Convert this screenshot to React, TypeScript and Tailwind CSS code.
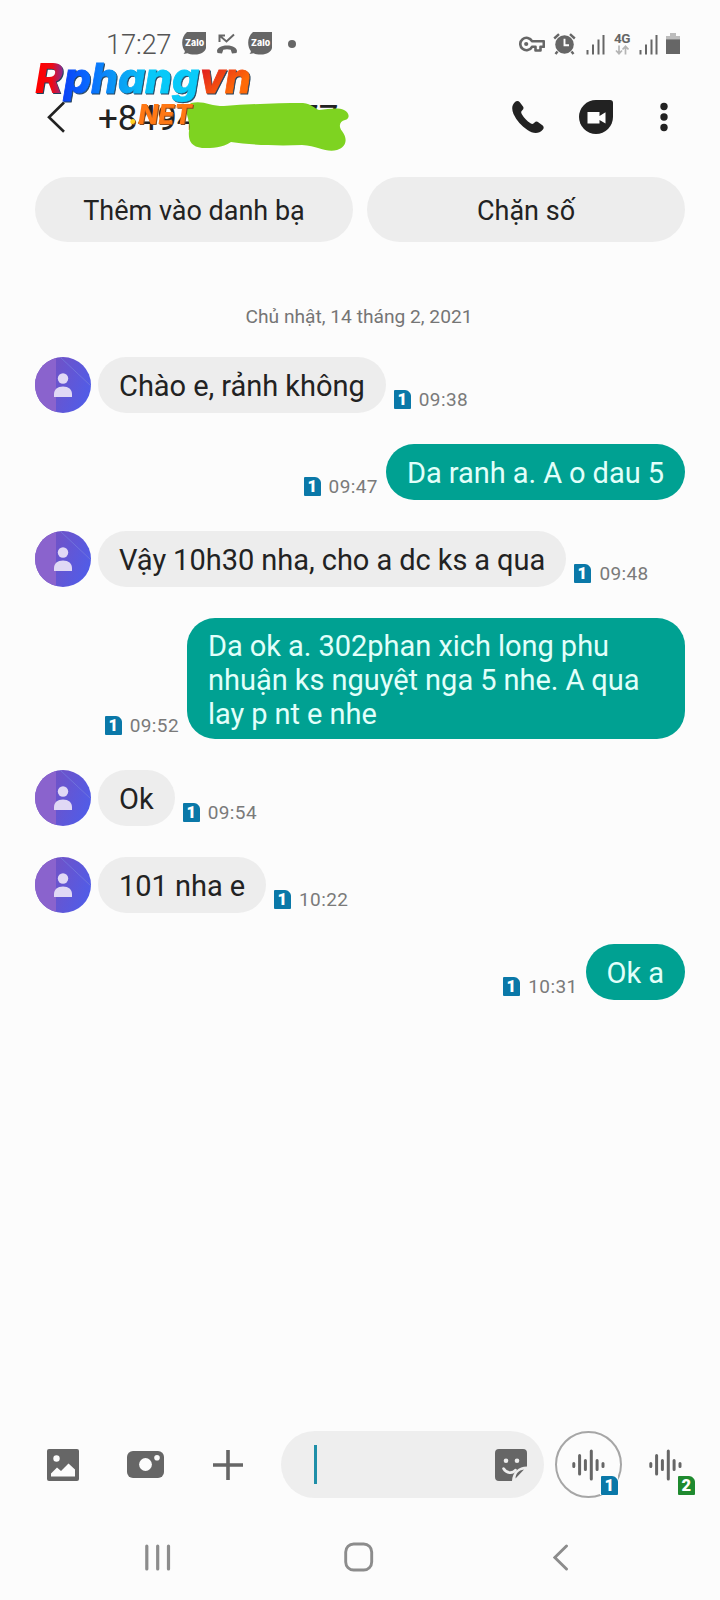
import { clsx } from 'clsx';

type Message = {
  id: number;
  text: string;
  lines?: string[];
  time: string;
  mine?: boolean;
};

const messages: Message[] = [
  { id: 1, text: 'Chào e, rảnh không', time: '09:38' },
  { id: 2, text: 'Da ranh a. A o dau 5', time: '09:47', mine: true },
  { id: 3, text: 'Vậy 10h30 nha, cho a dc ks a qua', time: '09:48' },
  {
    id: 4,
    text: '',
    lines: ['Da ok a. 302phan xich long phu', 'nhuận ks nguyệt nga 5 nhe. A qua', 'lay p nt e nhe'],
    time: '09:52',
    mine: true,
  },
  { id: 5, text: 'Ok', time: '09:54' },
  { id: 6, text: '101 nha e', time: '10:22' },
  { id: 7, text: 'Ok a', time: '10:31', mine: true },
];

function ZaloIcon() {
  return (
    <svg width="24" height="24" viewBox="0 0 24 24">
      <path d="M5 0H24V16C23 20 19 22.500 13 22.500C9 22.500 7 22 5.500 21.200L1.500 22C2.500 21 3 20 2.800 19C-1 14-1 5 5 0Z" fill="#666" />
      <text x="12.600" y="14.300" textAnchor="middle" fontSize="9.500" fontWeight="800" fill="#fff" fontFamily="Inter, sans-serif" textLength="19" lengthAdjust="spacingAndGlyphs">
        Zalo
      </text>
    </svg>
  );
}

function MissedCallIcon() {
  return (
    <svg width="22" height="22" viewBox="0 0 22 22" fill="none">
      <path d="M3.500 9V2.500H9M3.800 2.800L10.500 8.500L18 1.500" stroke="#666" strokeWidth="2" />
      <path d="M1 18C1 15 5 12.500 11 12.500S21 15 21 18L20.500 20L16 20.500L14.700 16.700C12.500 16 9.500 16 7.300 16.700L6 20.500L1.500 20Z" fill="#666" />
    </svg>
  );
}

function SignalIcon() {
  return (
    <svg width="19" height="21" viewBox="0 0 19 21" stroke="#666" strokeWidth="2">
      <path d="M1.500 16V20.500M7 10.500V20.500M12.500 5.500V20.500M17.500 1V20.500" />
    </svg>
  );
}

function StatusBar() {
  return (
    <div className="flex h-[62px] shrink-0 items-center pt-[26px] pl-[106px] pr-10">
      <span className="w-[76px] pt-0.5 text-[27.500px] leading-none font-light tracking-[-0.3px] text-[#555]">17:27</span>
      <ZaloIcon />
      <span className="ml-2.5">
        <MissedCallIcon />
      </span>
      <span className="ml-2.5">
        <ZaloIcon />
      </span>
      <span className="ml-4 h-2 w-2 rounded-full bg-[#666]" />
      <div className="ml-auto flex items-center">
        <svg width="26" height="16" viewBox="0 0 26 16" fill="none" stroke="#666" strokeWidth="2.600">
          <path d="M13 5.200A6.200 6.200 0 1 0 13 10.800H16.500V14.500H21.500V10.800H24.800V5.200Z" strokeLinejoin="round" />
          <circle cx="7.200" cy="8" r="2.100" fill="#666" stroke="none" />
        </svg>
        <svg className="ml-2" width="23" height="22" viewBox="0 0 23 22" fill="none">
          <circle cx="11.500" cy="11.500" r="9.300" fill="#666" />
          <path d="M1.200 5.500L6 1.200M17 1.200L21.800 5.500M4.500 18.500L2.500 21M18.500 18.500L20.500 21" stroke="#666" strokeWidth="2.400" />
          <path d="M11.500 5.800V12.200H16" stroke="#fff" strokeWidth="1.900" />
        </svg>
        <span className="ml-2.5">
          <SignalIcon />
        </span>
        <div className="ml-[9px] flex w-4 flex-col items-center">
          <span className="text-[13.500px] leading-[11px] font-bold tracking-[-0.5px] text-[#666]">4G</span>
          <svg className="mt-px" width="14" height="10" viewBox="0 0 14 10" fill="none" stroke="#b5b5b5" strokeWidth="1.700">
            <path d="M4 0.500V8.500M1 5.500L4 8.700L7 5.500M10.500 9.500V1.500M7.500 4.500L10.500 1.300L13.500 4.500" />
          </svg>
        </div>
        <span className="ml-[9px]">
          <SignalIcon />
        </span>
        <svg className="ml-2" width="14" height="22" viewBox="0 0 14 22">
          <path d="M4 0H10V3H14V6.500H0V3H4Z" fill="#bcbcbc" />
          <path d="M0 6.300H14V21H0Z" fill="#666" />
        </svg>
      </div>
    </div>
  );
}

function Watermark() {
  return (
    <svg className="absolute left-[20px] top-[41px]" width="250" height="110" viewBox="20 40 250 110">
      <defs>
        <linearGradient id="logoRed" gradientUnits="userSpaceOnUse" x1="38" y1="0" x2="66" y2="0">
          <stop offset="0" stopColor="#ff0000" />
          <stop offset="0.500" stopColor="#ee0a14" />
          <stop offset="1" stopColor="#6a35b5" />
        </linearGradient>
        <linearGradient id="logoBlue" gradientUnits="userSpaceOnUse" x1="62" y1="0" x2="200" y2="0">
          <stop offset="0" stopColor="#0a40f5" />
          <stop offset="0.200" stopColor="#0a6cff" />
          <stop offset="0.400" stopColor="#0a9cf5" />
          <stop offset="0.650" stopColor="#08c8f8" />
          <stop offset="1" stopColor="#08ccfa" />
        </linearGradient>
        <linearGradient id="logoOrange" gradientUnits="userSpaceOnUse" x1="205" y1="70" x2="225" y2="95">
          <stop offset="0" stopColor="#e3231c" />
          <stop offset="1" stopColor="#ff6a08" />
        </linearGradient>
      </defs>
      <g fontFamily="Inter, sans-serif" fontStyle="italic" fontWeight="800" fontSize="41" className="drop-shadow-[1px_1px_0_#24425c]">
        <text x="35" y="92" textLength="28" lengthAdjust="spacingAndGlyphs" fill="url(#logoRed)">
          R
        </text>
        <text x="64" y="92" textLength="135" lengthAdjust="spacingAndGlyphs" fill="url(#logoBlue)" stroke="url(#logoBlue)" strokeWidth="0.800">
          phang
        </text>
        <text x="200" y="92" textLength="51" lengthAdjust="spacingAndGlyphs" fill="url(#logoOrange)" stroke="url(#logoOrange)" strokeWidth="0.800">
          vn
        </text>
      </g>
      <g fontFamily="Inter, sans-serif" fontStyle="italic" fontWeight="800" fontSize="27" className="drop-shadow-[1px_1px_0_#8c4a1c]">
        <text x="129" y="122.500" textLength="63" lengthAdjust="spacingAndGlyphs" fill="#ff7814">
          <tspan fill="#ffd21e">.</tspan>NET
        </text>
      </g>
    </svg>
  );
}

function Header() {
  return (
    <header className="flex h-[115px] shrink-0 items-start pt-[38px] pl-[46px] pr-[51px]">
      <svg className="mt-px" width="20" height="32" viewBox="0 0 20 32" fill="none" stroke="#222" strokeWidth="2.600">
        <path d="M18 1.500L3 16.200L18 30.700" />
      </svg>
      <h1 className="mt-px ml-[32px] flex text-[35px] leading-[36px] text-[#222]">
        <span className="w-[201px]">+8494</span>
        <span>77</span>
      </h1>
      <div className="ml-auto flex items-start">
        <svg width="32" height="34" viewBox="0 0 32 34" fill="#222">
          <path d="M3 2C4.500 0.500 6.500 0.500 7.800 2.200L11 6.500C12 8 11.500 9.300 10.300 10.300C8.700 11.600 9 13 10 14.500C12 18 15 21 18.500 23.200C20 24.200 21.300 24.200 22.300 22.800C23.500 21.500 25 21.200 26.300 22.200L30.700 25.500C32 26.700 32 28.500 30.700 29.800C26.500 34.500 20.500 33.500 15.500 30C9.500 26 4.500 20.500 1.500 14C-0.500 9.300-0.300 5 3 2Z" />
        </svg>
        <svg className="ml-[35px]" width="34" height="34" viewBox="0 0 34 34">
          <path d="M17 0H31Q34 0 34 3V17A17 17 0 1 1 17 0Z" fill="#222" />
          <path d="M8.500 12H20.500V16L26.500 12.300V23.500L20.500 20V23.500H8.500Z" fill="#fff" />
        </svg>
        <svg className="ml-[46px]" width="10" height="34" viewBox="0 0 10 34" fill="#222">
          <circle cx="5" cy="6.500" r="3.700" />
          <circle cx="5" cy="17" r="3.700" />
          <circle cx="5" cy="27.500" r="3.700" />
        </svg>
      </div>
      <svg className="absolute left-[184px] top-[97px]" width="168" height="56" viewBox="184 96 168 56">
        <path
          d="M191 102C203 99 210 105 224 105C250 103 278 102 303 102C312 103 314 107 319 109C329 108 338 106 344 109C350 112 350 118 345 119C340 120 338 125 342 130C349 139 345 147 337 149C326 152 319 145 302 144C277 145 250 144 231 141C222 147 213 147 202 147C191 146 188 139 189 130C191 119 185 115 187 106Z"
          fill="#7ed321"
        />
      </svg>
      <Watermark />
    </header>
  );
}

function Avatar() {
  return (
    <svg className="h-14 w-14 shrink-0" viewBox="0 0 56 56">
      <defs>
        <linearGradient id="avatarFill" x1="0.200" y1="0.200" x2="1" y2="0.500">
          <stop offset="0" stopColor="#7452c4" />
          <stop offset="0.300" stopColor="#6a54cd" />
          <stop offset="1" stopColor="#525ce6" />
        </linearGradient>
        <clipPath id="avatarClip">
          <circle cx="28" cy="28" r="28" />
        </clipPath>
      </defs>
      <g clipPath="url(#avatarClip)">
        <rect width="56" height="56" fill="url(#avatarFill)" />
        <rect width="21" height="56" fill="#8a63cd" />
        <path d="M25 0L56 29" stroke="#7478dd" strokeWidth="0.800" />
      </g>
      <circle cx="28" cy="21.500" r="5.200" fill="#e0d8f5" />
      <path d="M19 40V37C19 32.500 22.500 29.500 28 29.500S37 32.500 37 37V40Z" fill="#e0d8f5" />
    </svg>
  );
}

function SimBadge({ sim = 1, className }: { sim?: 1 | 2; className?: string }) {
  return (
    <svg className={className} width="17" height="19" viewBox="0 0 17 19">
      <path d="M1 0H11C14 0 17 3 17 6V18Q17 19 16 19H1Q0 19 0 18V1Q0 0 1 0Z" fill={sim === 1 ? '#0a78a8' : '#1f8a2f'} />
      <text x="8.300" y="15.300" textAnchor="middle" fontSize="16.500" fontWeight="900" fill="#fff" fontFamily="Roboto, sans-serif">
        {sim}
      </text>
    </svg>
  );
}

function MessageRow({ message }: { message: Message }) {
  const { text, lines, time, mine } = message;

  return (
    <div className={clsx('flex items-end', mine && 'flex-row-reverse')}>
      {!mine && (
        <div className="mr-[7px]">
          <Avatar />
        </div>
      )}
      <div
        className={clsx(
          'rounded-[28px] px-[21px] text-[29px] leading-[34px] [word-spacing:-0.200px] whitespace-nowrap',
          mine ? 'bg-[#00a192] text-[#e2fffa]' : 'bg-[#ededed] text-[#222]',
          lines ? 'w-[498px] pt-[11px] pb-2' : 'pt-3 pb-2.5',
        )}
      >
        {lines ? lines.map((line) => <div key={line}>{line}</div>) : text}
      </div>
      <div className={clsx('flex items-center pb-1', mine ? 'mr-2' : 'ml-2')}>
        <SimBadge />
        <span className="ml-2 text-[19px] leading-[19px] tracking-[0.4px] text-[#7a7a7a]">{time}</span>
      </div>
    </div>
  );
}

function WaveIcon() {
  return (
    <svg width="33" height="32" viewBox="0 0 33 32" stroke="#666" strokeWidth="3" strokeLinecap="round">
      <path d="M1.800 14.500V17.500M7.600 6.500V25M13.400 11.500V20.500M19.300 2V30M25.100 11.500V20.500M31 14.500V17.500" />
    </svg>
  );
}

function Composer() {
  return (
    <div className="flex h-[67px] shrink-0 items-center pl-[47px]">
      <svg width="32" height="32" viewBox="0 0 32 32">
        <rect width="32" height="32" rx="2" fill="#666" />
        <circle cx="9.500" cy="9.500" r="3.200" fill="#fcfcfc" />
        <path d="M4 27.500V24.500L10 18.500L14 22L21.500 14.500L28 20.500V27.500Z" fill="#fcfcfc" />
      </svg>
      <svg className="ml-12" width="37" height="27" viewBox="0 0 37 27">
        <rect width="37" height="27" rx="6" fill="#666" />
        <circle cx="18.500" cy="13.500" r="6.400" fill="#fcfcfc" />
        <circle cx="30" cy="6.800" r="2.800" fill="#fcfcfc" />
      </svg>
      <svg className="ml-12" width="32" height="32" viewBox="0 0 32 32" stroke="#666" strokeWidth="3.600">
        <path d="M1 16H31M16 1V31" />
      </svg>
      <div className="ml-[37px] flex h-[67px] w-[263px] items-center justify-between rounded-full bg-[#eee] pr-[17px] pl-[33px]">
        <span className="h-[39px] w-[3px] bg-[#1f8fa8]" />
        <svg width="32" height="32" viewBox="0 0 32 32">
          <path d="M4 0H28Q32 0 32 4V17.500C23.500 17.500 17.500 23 17 32H4Q0 32 0 28V4Q0 0 4 0Z" fill="#666" />
          <path d="M8.500 19.500C11.500 24.500 17.500 25 20.500 21" stroke="#eee" strokeWidth="2.600" strokeLinecap="round" fill="none" />
          <path d="M20.500 29.500C20.500 25 23.500 21.200 29 20.500Z" fill="#666" />
          <circle cx="11" cy="11.800" r="2.300" fill="#eee" />
          <circle cx="22" cy="11.800" r="2.300" fill="#eee" />
        </svg>
      </div>
      <div className="relative ml-[11px] flex h-[67px] w-[67px] items-center justify-center rounded-full border-2 border-[#a6a6a6]">
        <WaveIcon />
        <span className="absolute top-[42px] left-[43px] bg-[#fcfcfc] pt-px pl-px">
          <SimBadge />
        </span>
      </div>
      <div className="relative ml-[27px]">
        <WaveIcon />
        <SimBadge sim={2} className="absolute top-[27px] left-[29px]" />
      </div>
    </div>
  );
}

function NavBar() {
  return (
    <nav className="mt-[44px] flex h-[58px] shrink-0 items-start pl-[145px]" aria-label="System">
      <svg className="mt-0.5" width="26" height="27" viewBox="0 0 26 27" stroke="#8c8c8c" strokeWidth="3.200" strokeLinecap="round">
        <path d="M1.800 2V25M12.700 2V25M23.500 2V25" />
      </svg>
      <svg className="ml-[173px]" width="30" height="30" viewBox="0 0 30 30" fill="none">
        <rect x="1.700" y="2" width="26" height="26" rx="8" stroke="#8c8c8c" strokeWidth="2.900" />
      </svg>
      <svg className="ml-[179px] mt-0.5" width="16" height="27" viewBox="0 0 16 27" fill="none" stroke="#8c8c8c" strokeWidth="2.900" strokeLinecap="round">
        <path d="M13.500 2L1.800 13.500L13.500 25" />
      </svg>
    </nav>
  );
}

export default function App() {
  return (
    <div className="relative flex h-[1600px] w-[720px] flex-col overflow-hidden bg-[#fcfcfc] font-['Roboto',sans-serif]">
      <StatusBar />
      <Header />
      <div className="grid h-[65px] shrink-0 grid-cols-2 gap-3.5 px-[35px] text-[27px] text-[#222]">
        <button className="rounded-full bg-[#ededed] pt-1">Thêm vào danh bạ</button>
        <button className="rounded-full bg-[#ededed] pt-1">Chặn số</button>
      </div>
      <main className="flex-1 px-[35px]">
        <p className="pt-[64px] pr-0.5 text-center text-[19.200px] leading-[22px] text-[#757575]">Chủ nhật, 14 tháng 2, 2021</p>
        <div className="mt-[29px] flex flex-col gap-[31px]">
          {messages.map((message) => (
            <MessageRow key={message.id} message={message} />
          ))}
        </div>
      </main>
      <Composer />
      <NavBar />
    </div>
  );
}
